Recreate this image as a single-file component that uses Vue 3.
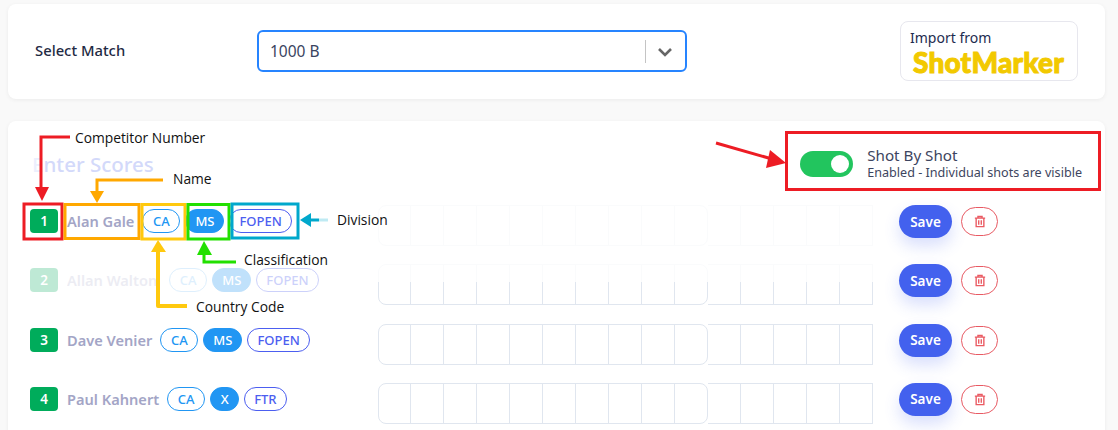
<template>
  <div class="page">
    <section class="card match-card">
      <label class="match-label">Select Match</label>
      <div class="select">
        <span class="select-value">1000 B</span>
        <span class="select-sep"></span>
        <svg class="chevron" width="16" height="10" viewBox="0 0 16 10">
          <path d="M2 2l6 6 6-6" fill="none" stroke="#666" stroke-width="2.6" />
        </svg>
      </div>
      <button class="import-btn">
        <span class="import-text">Import from</span>
        <span class="import-logo">ShotMarker</span>
      </button>
    </section>

    <section class="card scores-card">
      <div class="scores-head">
        <h2 class="scores-title"><span class="title-first">E</span>nter Scores</h2>
        <div class="toggle-wrap">
          <span class="toggle"><span class="toggle-knob"></span></span>
          <div class="toggle-text">
            <div class="toggle-title">Shot By Shot</div>
            <div class="toggle-sub">Enabled - Individual shots are visible</div>
          </div>
        </div>
      </div>

      <div class="rows">
        <div v-for="(c, i) in competitors" :key="c.num" class="row" :class="'row-' + (i + 1)">
          <div class="who">
            <span class="num">{{ c.num }}</span>
            <span class="name">{{ c.name }}</span>
            <span class="pill pill-country">{{ c.country }}</span>
            <span class="pill pill-class">{{ c.cls }}</span>
            <span class="pill pill-div">{{ c.div }}</span>
          </div>
          <div class="shots">
            <div class="shot-group sighters">
              <span v-for="n in 10" :key="n" class="cell"></span>
            </div>
            <div class="shot-group extras">
              <span v-for="n in 5" :key="n" class="cell"></span>
            </div>
            <span v-if="i === 1" class="wash"></span>
          </div>
          <div class="actions">
            <button class="save">Save</button>
            <button class="del">
              <svg width="12" height="13" viewBox="0 0 14 15" fill="none" stroke="#ea5a62" stroke-width="1.600">
                <path d="M1 3.500h12M4.600 3.500V1.600h4.800v1.900M2.500 3.500v10h9v-10M5.500 6v5.400M8.500 6v5.400" />
              </svg>
            </button>
          </div>
        </div>
      </div>
    </section>

    <svg class="notes" width="1118" height="430" viewBox="0 0 1118 430">
      <g fill="none" stroke-width="3">
        <path d="M70 137H41v52" stroke="#ed1c24" />
        <rect x="24" y="204" width="38" height="35" stroke="#ed1c24" />
        <path d="M163 180H97v12" stroke="#ffa800" />
        <rect x="65" y="204.500" width="74" height="34" stroke="#ffa800" />
        <rect x="142" y="204.500" width="43" height="34.500" stroke="#ffc90e" />
        <path d="M187 306H158V251" stroke="#ffc90e" stroke-width="4" stroke-linejoin="round" />
        <rect x="188" y="204.500" width="41" height="34.500" stroke="#22e000" />
        <path d="M236 262H204V254" stroke="#22e000" />
        <rect x="232" y="204" width="66" height="34" stroke="#00a8cc" />
        <path d="M310 220H319" stroke="#00a8cc" />
        <path d="M319 220H328" stroke="#bfeaf3" />
        <rect x="786.500" y="132.500" width="313" height="57" stroke="#ed1c24" />
        <path d="M716 143L772 159" stroke="#ed1c24" />
      </g>
      <polygon points="35,187 49,187 42,201" fill="#ed1c24" />
      <polygon points="90,191 104,191 97,203" fill="#ffa800" />
      <polygon points="151,252 166,252 158,240" fill="#ffc90e" />
      <polygon points="197,255 212,255 204,241" fill="#22e000" />
      <polygon points="300,220 311,213 311,227" fill="#00a8cc" />
      <polygon points="786,163 770,150 766,168" fill="#ed1c24" />
      <g class="note-text">
        <text x="75" y="143">Competitor Number</text>
        <text x="173" y="184">Name</text>
        <text x="337" y="225">Division</text>
        <text x="244" y="265">Classification</text>
        <text x="196" y="312">Country Code</text>
      </g>
    </svg>
  </div>
</template>

<script setup>
const competitors = [
  { num: 1, name: 'Alan Gale', country: 'CA', cls: 'MS', div: 'FOPEN' },
  { num: 2, name: 'Allan Walton', country: 'CA', cls: 'MS', div: 'FOPEN' },
  { num: 3, name: 'Dave Venier', country: 'CA', cls: 'MS', div: 'FOPEN' },
  { num: 4, name: 'Paul Kahnert', country: 'CA', cls: 'X', div: 'FTR' },
];
</script>

<style>
html,
body {
  margin: 0;
  height: 100%;
  overflow: hidden;
  background: #f9f9f9;
}
</style>

<style scoped>
.page {
  position: relative;
  width: 1118px;
  height: 430px;
  box-sizing: border-box;
  padding: 4px 13px 0 8px;
  overflow: hidden;
  font-family: "Noto Sans", Lato, sans-serif;
  color: #27304a;
}

.card {
  background: #fff;
  border-radius: 8px;
  box-shadow: 0 1px 4px rgba(0, 0, 0, 0.06);
}

.match-card {
  display: flex;
  align-items: center;
  height: 95px;
  padding-left: 27px;
  margin-bottom: 22px;
}

.match-label {
  width: 222px;
  margin-bottom: 3px;
  font-size: 14.800px;
  font-weight: 500;
  color: #1f2a44;
}

.select {
  display: flex;
  align-items: center;
  box-sizing: border-box;
  width: 430px;
  height: 42px;
  border: 2px solid #2684ff;
  border-radius: 6px;
  padding-left: 11px;
  margin-bottom: 1px;
}

.select-value {
  flex: 1;
  font-size: 15.500px;
  color: #3a4460;
}

.select-sep {
  width: 1px;
  height: 23px;
  background: #c4c4c4;
}

.chevron {
  margin: 1px 12px 0 11px;
}

.import-btn {
  display: flex;
  flex-direction: column;
  align-items: flex-start;
  box-sizing: border-box;
  width: 178px;
  height: 60px;
  margin: 0 0 1px 213px;
  padding: 6px 0 0 9px;
  background: #fff;
  border: 1px solid #e7e7ee;
  border-radius: 8px;
  font-family: inherit;
}

.import-text {
  font-size: 14px;
  line-height: 19px;
  color: #1d2c4f;
}

.import-logo {
  margin: 3px 0 0 3px;
  font-family: Lato, sans-serif;
  font-size: 28px;
  line-height: 25px;
  font-weight: 900;
  letter-spacing: 0.2px;
  color: #f2c900;
  -webkit-text-stroke: 1px #f2c900;
}

.scores-card {
  height: 400px;
  padding: 0 23px 0 22px;
}

.scores-head {
  display: flex;
  align-items: center;
  justify-content: space-between;
  box-sizing: border-box;
  height: 84px;
  padding-top: 2px;
}

.scores-title {
  margin: 0 0 0 2px;
  font-size: 20.500px;
  font-weight: 500;
  color: #d3d9fa;
}

.title-first {
  color: #eceffd;
}

.toggle-wrap {
  display: flex;
  align-items: center;
  gap: 14px;
}

.toggle {
  display: flex;
  align-items: center;
  justify-content: flex-end;
  box-sizing: border-box;
  width: 53px;
  height: 26px;
  padding-right: 4px;
  background: #22c55e;
  border-radius: 13px;
}

.toggle-knob {
  width: 18px;
  height: 18px;
  background: #fff;
  border-radius: 50%;
}

.toggle-text {
  margin-bottom: 2px;
}

.toggle-title {
  font-size: 15.200px;
  line-height: 18px;
  color: #3d4560;
}

.toggle-sub {
  font-size: 12.600px;
  line-height: 17px;
  color: #3d4560;
}

.rows {
  display: flex;
  flex-direction: column;
  gap: 18px;
}

.row {
  display: flex;
  align-items: flex-start;
  height: 41.330px;
}

.who {
  display: flex;
  align-items: center;
  gap: 5px;
  width: 348px;
  height: 32px;
}

.num {
  width: 28px;
  height: 24px;
  border-radius: 4px;
  background: #00ac5b;
  color: #fff;
  font-size: 13.500px;
  font-weight: 600;
  line-height: 24px;
  text-align: center;
  margin-right: 4px;
}

.name {
  font-size: 14.600px;
  font-weight: 600;
  color: #a3a5c6;
  margin-right: 3px;
}

.pill {
  box-sizing: border-box;
  height: 24px;
  padding: 0 9px;
  border-radius: 12px;
  font-size: 13px;
  font-weight: 500;
  line-height: 22px;
  text-align: center;
  border: 1px solid;
}

.pill-country {
  min-width: 38px;
  border-color: #2196f3;
  color: #2196f3;
}

.pill-class {
  min-width: 29px;
  border-color: #2196f3;
  background: #2196f3;
  color: #fff;
}

.pill-div {
  border-color: #4c5ef0;
  color: #4c5ef0;
}

.shots {
  position: relative;
  display: flex;
  width: 495px;
}

.shot-group {
  display: flex;
  height: 41px;
  box-sizing: border-box;
  border: 1px solid #e0e6ef;
}

.sighters {
  border-radius: 8px;
}

.extras {
  border-left: 0;
}

.cell {
  box-sizing: border-box;
  width: 33px;
  border-right: 1px solid #e0e6ef;
}

.sighters .cell:first-child {
  width: 32px;
}

.cell:last-child {
  border-right: 0;
  width: 32px;
}

.wash {
  position: absolute;
  left: 0;
  right: 0;
  top: -1px;
  height: 19px;
  background: rgba(255, 255, 255, 0.82);
}

.row-1 .shots {
  opacity: 0.15;
}

.row-2 .num {
  opacity: 0.25;
}

.row-2 .name {
  opacity: 0.2;
  margin-right: 7px;
}

.row-2 .pill {
  opacity: 0.28;
}

.row-2 .pill-country {
  opacity: 0.14;
}

.actions {
  display: flex;
  align-items: center;
  gap: 9px;
  margin-left: 26px;
}

.save {
  width: 53px;
  height: 33px;
  padding: 0;
  border: 0;
  border-radius: 17px;
  background: #4361ee;
  box-shadow: 0 8px 16px rgba(67, 97, 238, 0.2);
  color: #fff;
  font-family: inherit;
  font-size: 13.500px;
  font-weight: 600;
}

.del {
  display: flex;
  align-items: center;
  justify-content: center;
  width: 37px;
  height: 29px;
  padding: 0;
  background: #fff;
  border: 1px solid #e85a63;
  border-radius: 15px;
}

.notes {
  position: absolute;
  left: 0;
  top: 0;
  pointer-events: none;
}

.note-text text {
  font-family: "Open Sans", "Noto Sans", sans-serif;
  font-size: 13.800px;
  fill: #111;
}
</style>
